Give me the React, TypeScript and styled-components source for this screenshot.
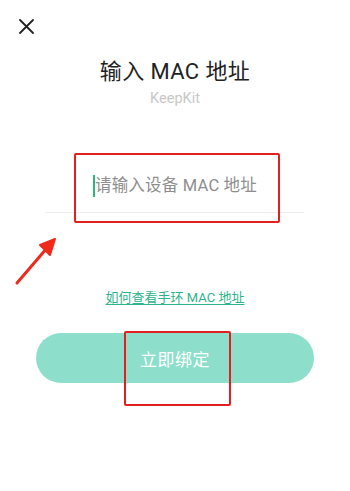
import React from 'react'
import styled, { createGlobalStyle } from 'styled-components'

const GlobalStyle = createGlobalStyle`
  html, body {
    margin: 0;
    padding: 0;
    background: #ffffff;
  }
  body {
    font-family: Roboto, "Noto Sans CJK SC", sans-serif;
  }
`;

const Page = styled.div`
  position: relative;
  width: 350px;
  height: 491px;
  overflow: hidden;
  background: #ffffff;
  display: flex;
  flex-direction: column;
`;

const TopBar = styled.div`
  height: 54px;
  padding: 19px 0 0 19px;
  box-sizing: border-box;
`;

const CloseButton = styled.button`
  width: 15px;
  height: 15px;
  padding: 0;
  border: none;
  background: none;
  display: block;
  svg {
    display: block;
  }
`;

const Title = styled.h1`
  margin: 5px 0 0;
  font-size: 22px;
  font-weight: 400;
  line-height: 26px;
  color: #222222;
  text-align: center;
  letter-spacing: 0.4px;
`;

const SubTitle = styled.div`
  margin-top: 6px;
  font-size: 14.5px;
  line-height: 16px;
  color: #c8c8c8;
  text-align: center;
`;

const InputBlock = styled.div`
  margin: 53px 46px 0;
  border-bottom: 1px solid #ececec;
  height: 52px;
  display: flex;
  align-items: center;
  justify-content: center;
`;

const Cursor = styled.span`
  width: 2px;
  height: 22px;
  background: #2db57e;
`;

const Placeholder = styled.span`
  font-size: 16.5px;
  color: #8e8e8e;
  line-height: 22px;
  letter-spacing: 0.2px;
`;

const HelpLink = styled.a`
  margin-top: 76px;
  align-self: center;
  font-size: 13px;
  line-height: 18px;
  color: #2eb48c;
  text-decoration: underline;
  text-underline-offset: 2px;
`;

const BindButton = styled.button`
  margin: 26px 36px 0;
  height: 50px;
  border: none;
  border-radius: 25px;
  background: #8ddfcb;
  color: #ffffff;
  font-family: inherit;
  font-size: 17px;
  letter-spacing: 0.5px;
`;

const Highlight = styled.div<{ $x: number; $y: number; $w: number; $h: number }>`
  position: absolute;
  left: ${p => p.$x}px;
  top: ${p => p.$y}px;
  width: ${p => p.$w}px;
  height: ${p => p.$h}px;
  border: 2px solid #e41f1f;
  border-radius: 2px;
  box-sizing: border-box;
  pointer-events: none;
`;

const Arrow = styled.svg`
  position: absolute;
  left: 14px;
  top: 234px;
  pointer-events: none;
`;

const App = () => {
  return (
    <Page>
      <GlobalStyle />
      <TopBar>
        <CloseButton aria-label="关闭">
          <svg width="15" height="15" viewBox="0 0 15 15">
            <path d="M1 1 L14 14 M14 1 L1 14" stroke="#222" strokeWidth="1.8" strokeLinecap="round" />
          </svg>
        </CloseButton>
      </TopBar>
      <Title>输入 MAC 地址</Title>
      <SubTitle>KeepKit</SubTitle>
      <InputBlock>
        <Cursor />
        <Placeholder>请输入设备 MAC 地址</Placeholder>
      </InputBlock>
      <HelpLink>如何查看手环 MAC 地址</HelpLink>
      <BindButton>立即绑定</BindButton>

      <Highlight $x={74} $y={153} $w={206} $h={70} />
      <Highlight $x={124} $y={331} $w={107} $h={75} />
      <Arrow width="46" height="52" viewBox="0 0 46 52">
        <path d="M3 49 L33 14" stroke="#f02a1a" strokeWidth="3" strokeLinecap="round" />
        <path d="M41 5 L26 11 L36 21 Z" fill="#f02a1a" stroke="#f02a1a" strokeWidth="2" strokeLinejoin="round" />
      </Arrow>
    </Page>
  )
}

export default App
